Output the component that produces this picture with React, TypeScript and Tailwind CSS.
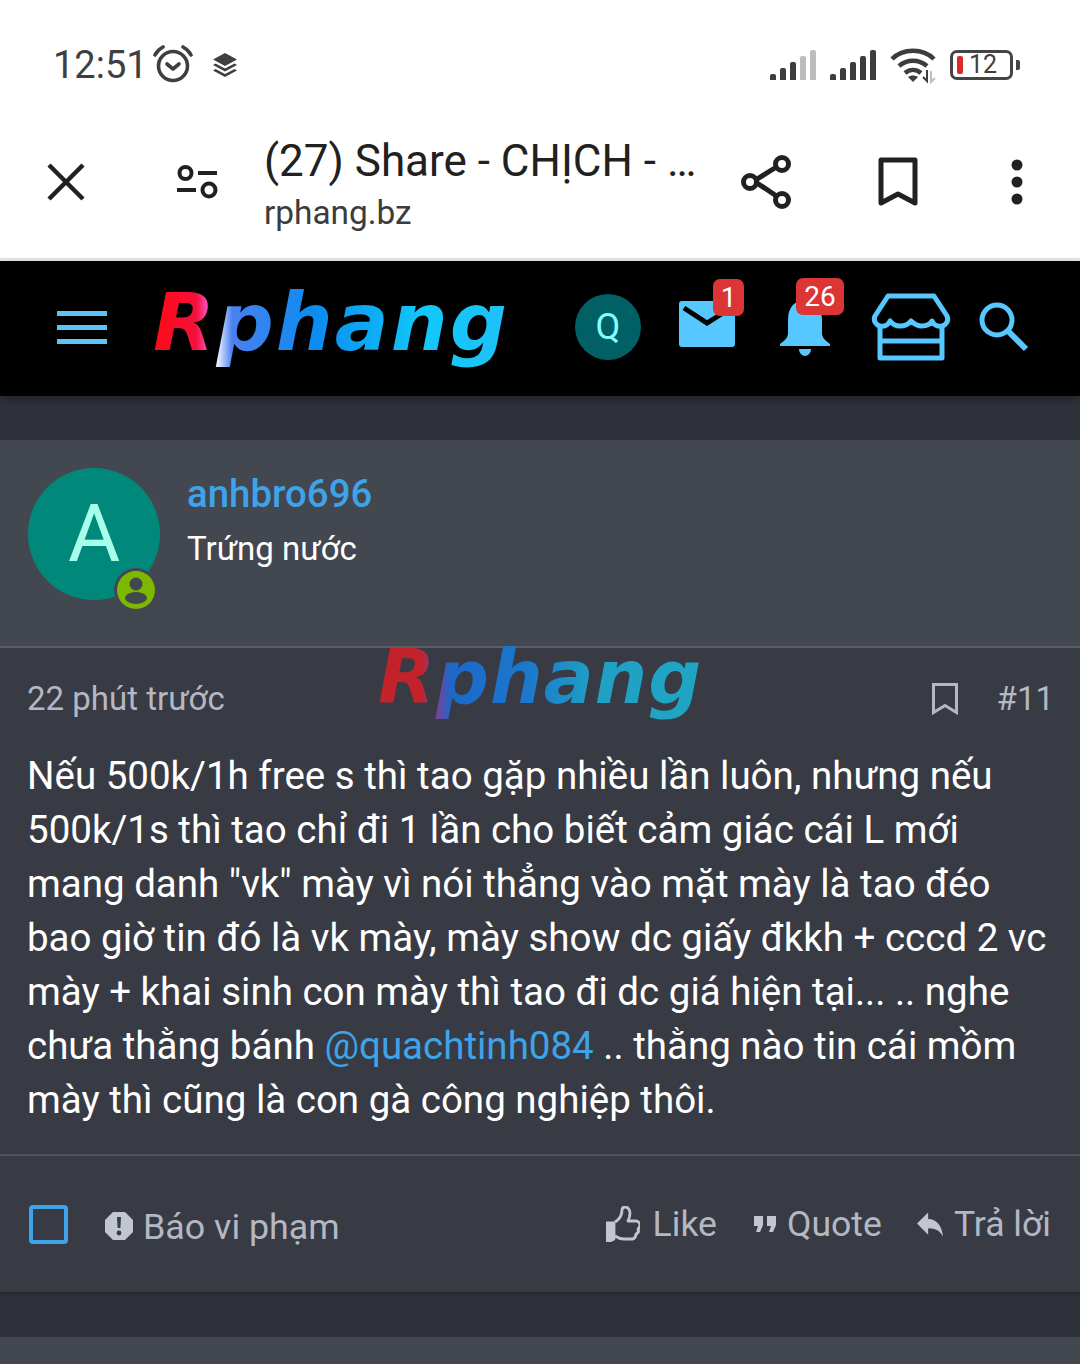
const font = { fontFamily: "Roboto, 'Noto Sans', sans-serif" };

function Bars({ dim }: { dim?: boolean }) {
  const heights = [6, 12, 18, 24, 30];
  return (
    <div className="flex items-end gap-[4px] h-[30px]">
      {heights.map((h, i) => (
        <div
          key={i}
          className={`w-[6px] rounded-t-[2px] ${dim && i > 2 ? "bg-[#bdbdbd]" : "bg-[#3d3d3d]"}`}
          style={{ height: h }}
        />
      ))}
    </div>
  );
}

function StatusBar() {
  return (
    <div className="h-[125px] flex items-start justify-between pl-[53px] pr-[60px] pt-[44px]">
      <div className="flex items-center h-[42px]">
        <span className="text-[38px] leading-[42px] text-[#3f3f3f]">12:51</span>
        <svg className="ml-[5px] -mt-[2px]" width="40" height="38" viewBox="0 0 40 38" fill="none" stroke="#3f3f3f" strokeWidth="3.6">
          <circle cx="20" cy="21" r="14.5" />
          <path d="M14 19l6 5 6-5" strokeLinecap="round" strokeLinejoin="round" />
          <path d="M2 10c2-4 4-6 8-8M38 10c-2-4-4-6-8-8" strokeLinecap="round" />
        </svg>
        <svg className="ml-[19px]" width="26" height="26" viewBox="0 0 26 26" fill="#3f3f3f">
          <path d="M13 1l12 6.500-12 6.500L1 7.500z" />
          <path d="M3.500 11.500L1 13l12 6.500L25 13l-2.500-1.500L13 16.500z" />
          <path d="M3.500 17L1 18.500 13 25l12-6.500-2.500-1.500L13 22z" />
        </svg>
      </div>
      <div className="flex items-center h-[42px]">
        <Bars dim />
        <div className="ml-[14px]">
          <Bars />
        </div>
        <svg className="ml-[14px]" width="48" height="38" viewBox="0 0 48 38" fill="none" stroke="#3d3d3d" strokeWidth="4.500">
          <path d="M2 13C13 2 33 2 44 13" />
          <path d="M9 20c8-7 20-7 28 0" />
          <path d="M15 27c5-4 11-4 16 0" />
          <path d="M23 36l-5-5c3-2 7-2 10 0z" fill="#3d3d3d" stroke="none" />
          <path d="M37 24v11l-4-4" strokeWidth="2" />
          <path d="M41 25v11l4-4" stroke="#bdbdbd" strokeWidth="2" />
        </svg>
        <div className="ml-[12px] w-[63px] h-[30px] rounded-[7px] border-[3px] border-[#444] flex items-center pl-[4px] relative">
          <div className="w-[6px] h-[18px] rounded-[2px] bg-[#d92a2a]" />
          <span className="ml-[6px] text-[25px] leading-[26px] text-[#3f3f3f]">12</span>
        </div>
        <div className="ml-[3px] w-[4px] h-[10px] rounded-r-[2px] bg-[#444]" />
      </div>
    </div>
  );
}

function BrowserBar() {
  return (
    <div className="h-[136px] pb-[20px] flex items-center border-b-[3px] border-[#e6e6e6]">
      <div className="w-[132px] pl-[47px]">
        <svg width="38" height="38" viewBox="0 0 38 38" fill="none" stroke="#212121" strokeWidth="4.500">
          <path d="M2 2l34 34M36 2L2 36" />
        </svg>
      </div>
      <svg className="ml-[44px]" width="44" height="36" viewBox="0 0 44 36" fill="none" stroke="#212121" strokeWidth="4">
        <circle cx="9.500" cy="9" r="6" />
        <path d="M22 9h19" />
        <circle cx="33" cy="26" r="6.500" />
        <path d="M1 26h19" />
      </svg>
      <div className="ml-[44px] w-[432px] mt-[3px]">
        <div className="text-[44px] leading-[52px] text-[#212121] whitespace-nowrap">(27) Share - CHỊCH - …</div>
        <div className="text-[33.4px] leading-[38px] text-[#3c3c3c] mt-[7px]">rphang.bz</div>
      </div>
      <svg className="ml-[44px]" width="52" height="56" viewBox="0 0 52 56" fill="none" stroke="#212121" strokeWidth="5">
        <path d="M38 12L14 27l24 16" />
        <circle cx="42" cy="10" r="6.500" fill="#fff" />
        <circle cx="10" cy="28" r="6.500" fill="#fff" />
        <circle cx="42" cy="46" r="6.500" fill="#fff" />
      </svg>
      <svg className="ml-[86px]" width="40" height="50" viewBox="0 0 40 50" fill="none" stroke="#212121" strokeWidth="5">
        <path d="M3 46V3h34v43L20 37z" strokeLinejoin="round" />
      </svg>
      <div className="ml-[91px]">
        <svg width="16" height="46" viewBox="0 0 16 46" fill="#212121">
          <circle cx="8" cy="6" r="5.500" />
          <circle cx="8" cy="23" r="5.500" />
          <circle cx="8" cy="40" r="5.500" />
        </svg>
      </div>
    </div>
  );
}

function Logo({ small }: { small?: boolean }) {
  return (
    <span
      className={
        small
          ? "block font-bold italic whitespace-nowrap text-[74px] leading-[100px] tracking-[1px] bg-[linear-gradient(90deg,#c4222a_0%,#c4222a_13%,#8a3c90_17%,#1c68c8_22%,#1c78cc_45%,#20a0c4_65%,#20a5c4_100%)] bg-clip-text text-transparent pr-[8px]"
          : "block font-bold italic whitespace-nowrap text-[80px] leading-[108px] tracking-[2px] bg-[linear-gradient(90deg,#ff0a14_0%,#f5103a_12%,#ff60e0_16%,#e8f0ff_18%,#4a80f0_22%,#0a8cf0_45%,#12c8fa_75%,#20c0f8_100%)] bg-clip-text text-transparent pr-[8px]"
      }
      style={{ fontFamily: "'DejaVu Sans', sans-serif" }}
    >
      Rphang
    </span>
  );
}

function Badge({ children, className }: { children: string; className: string }) {
  return (
    <div
      className={`absolute h-[37px] rounded-[7px] bg-[#dc3535] text-white text-[28px] leading-[37px] text-center ${className}`}
    >
      {children}
    </div>
  );
}

function NavBar() {
  return (
    <div className="h-[135px] pb-[3px] bg-black flex items-center shadow-[0_4px_8px_rgba(0,0,0,0.3)] relative">
      <div className="ml-[57px] w-[50px] flex flex-col gap-[9px]">
        <div className="h-[5px] bg-[#5bc4f5]" />
        <div className="h-[5px] bg-[#5bc4f5]" />
        <div className="h-[5px] bg-[#5bc4f5]" />
      </div>
      <div className="ml-[46px] w-[360px] -mt-[8px]">
        <Logo />
      </div>
      <div className="ml-[62px] w-[66px] h-[66px] rounded-full bg-[#006064] text-[#84ffff] text-[36px] flex items-center justify-center">
        Q
      </div>
      <div className="ml-[38px] relative w-[56px] h-[46px] mt-[-6px]">
        <svg width="56" height="46" viewBox="0 0 56 46">
          <path d="M3 0h50a3 3 0 013 3v40a3 3 0 01-3 3H3a3 3 0 01-3-3V3a3 3 0 013-3z" fill="#57c7ff" />
          <path d="M5 7l23 15L52 7" fill="none" stroke="#000" strokeWidth="5" />
        </svg>
        <Badge className="w-[31px] -top-[22px] left-[34px]">1</Badge>
      </div>
      <div className="ml-[45px] relative w-[50px] h-[60px] -mt-[2px]">
        <svg width="50" height="60" viewBox="0 0 50 60" fill="#57c7ff">
          <path d="M8 24c0-14 8-20 17-20s17 6 17 20v13c0 5 4 8 8 11v2H0v-2c4-3 8-6 8-11z" />
          <path d="M19 53h12c0 4-3 7-6 7s-6-3-6-7z" />
        </svg>
        <Badge className="w-[48px] -top-[18px] left-[16px]">26</Badge>
      </div>
      <svg className="ml-[41px]" width="80" height="68" viewBox="0 0 80 68" fill="none" stroke="#57c7ff" strokeWidth="5" strokeLinejoin="round">
        <path d="M17 3h46l13 20c2 5-1 9-5 10-5 1-8-1-10-5-3 5-8 5-10 5-4 0-8-2-11-5-3 4-7 5-11 5-3 0-7-1-10-5-2 4-5 6-10 5-4-1-7-5-5-10z" />
        <path d="M9 33v32h62V33" />
        <path d="M9 48h62" />
      </svg>
      <svg className="ml-[28px]" width="50" height="50" viewBox="0 0 50 50" fill="none" stroke="#57c7ff">
        <circle cx="18" cy="18" r="15" strokeWidth="5" />
        <path d="M29 29l18 18" strokeWidth="6" />
      </svg>
    </div>
  );
}

function Post() {
  return (
    <div className="mt-[44px] bg-[#383b44] shadow-[0_2px_4px_rgba(0,0,0,0.25)] relative">
      <div className="h-[208px] bg-[#434750] border-b-[2px] border-[#5a5d65] flex pl-[28px] pt-[28px]">
        <div className="relative w-[132px] h-[132px] rounded-full bg-[#00897b] text-[#a7ffeb] text-[80px] flex items-center justify-center">
          A
          <div className="absolute left-[86px] top-[100px] w-[44px] h-[44px] rounded-full bg-[#434750] flex items-center justify-center">
            <div className="w-[38px] h-[38px] rounded-full bg-[#7cb800] flex items-center justify-center">
              <svg width="26" height="30" viewBox="0 0 26 30" fill="#434750">
                <circle cx="13" cy="9" r="6.500" />
                <ellipse cx="13" cy="23" rx="11" ry="6" />
              </svg>
            </div>
          </div>
        </div>
        <div className="ml-[27px]">
          <div className="text-[38.4px] leading-[50px] mt-[1px] font-medium text-[#3ea3e8]">anhbro696</div>
          <div className="text-[33px] leading-[44px] mt-[8px] text-white">Trứng nước</div>
        </div>
      </div>

      <div className="absolute left-[378px] top-[187px]">
        <Logo small />
      </div>

      <div className="flex items-center justify-between pl-[27px] pr-[26px] pt-[24px] h-[78px]">
        <span className="text-[33px] leading-[44px] text-[#b4b8c2]">22 phút trước</span>
        <div className="flex items-center text-[#b4b8c2]">
          <svg width="26" height="32" viewBox="0 0 26 32" fill="none" stroke="#b4b8c2" strokeWidth="3">
            <path d="M1.500 29.500V1.500h23v28L13 22.500z" />
          </svg>
          <span className="ml-[39px] text-[33px] leading-[44px]">#11</span>
        </div>
      </div>

      <div className="pl-[27px] pr-[28px] pt-[23px] pb-[27px] text-[38.5px] leading-[54px] text-white border-b-[2px] border-[#50535b]">
        Nếu 500k/1h free s thì tao gặp nhiều lần luôn, nhưng nếu 500k/1s thì tao chỉ đi 1 lần cho biết cảm giác cái L mới mang danh "vk" mày vì nói thẳng vào mặt mày là tao đéo bao giờ tin đó là vk mày, mày show dc giấy đkkh + cccd 2 vc mày + khai sinh con mày thì tao đi dc giá hiện tại... .. nghe chưa thằng bánh{" "}
        <span className="text-[#3ea3e8]">@quachtinh084</span> .. thằng nào tin cái mồm mày thì cũng là con gà công nghiệp thôi.
      </div>

      <div className="h-[136px] flex items-center pl-[29px] pr-[29px] text-[#b4b8c2]">
        <div className="w-[39px] h-[39px] rounded-[4px] border-[4px] border-[#3ea3e8]" />
        <svg className="ml-[37px] mt-[3px]" width="28" height="28" viewBox="0 0 28 28">
          <path d="M8 0h12l8 8v12l-8 8H8l-8-8V8z" fill="#c2c6cf" strokeLinejoin="round" />
          <path d="M12 5h4l-.6 11h-2.800z" fill="#383b44" />
          <circle cx="14" cy="21" r="2.400" fill="#383b44" />
        </svg>
        <span className="ml-[10px] mt-[5px] text-[35.8px] leading-[44px]">Báo vi phạm</span>
        <div className="ml-auto flex items-center">
          <svg width="34" height="36" viewBox="0 0 34 36" fill="none" stroke="#c2c6cf" strokeWidth="2.800" strokeLinejoin="round">
            <path d="M9 16c5-3 7-7 7-12 0-2 1-3 3-3 3 0 5 3 5 6 0 3-1 6-2 8h8c2 0 4 2 4 4 0 2-1 3-2 4 1 2 0 4-2 5 0 2-1 4-3 5H18c-3 0-6-1-9-3" />
            <path d="M0 17h8v16l-4 2H0z" fill="#c2c6cf" />
          </svg>
          <span className="ml-[13px] text-[35.6px] leading-[44px]">Like</span>
          <svg className="ml-[37px]" width="22" height="16" viewBox="0 0 22 16" fill="#c2c6cf">
            <path d="M0 0h9v9l-3 7H2l2-6H0z" />
            <path d="M13 0h9v9l-3 7h-4l2-6h-4z" />
          </svg>
          <span className="ml-[11px] text-[35.6px] leading-[44px]">Quote</span>
          <svg className="ml-[35px]" width="26" height="25" viewBox="0 0 28 26" fill="#c2c6cf">
            <path d="M12 0v7c9 0 15 7 16 19-3-6-8-9-16-9v7L0 12z" />
          </svg>
          <span className="ml-[11px] text-[35.6px] leading-[44px]">Trả lời</span>
        </div>
      </div>
    </div>
  );
}

export default function App() {
  return (
    <div className="w-[1080px] h-[1364px] overflow-hidden bg-[#2f323a]" style={font}>
      <div className="bg-white">
        <StatusBar />
        <BrowserBar />
      </div>
      <NavBar />
      <Post />
      <div className="mt-[45px] h-[40px] bg-[#434750]" />
    </div>
  );
}
